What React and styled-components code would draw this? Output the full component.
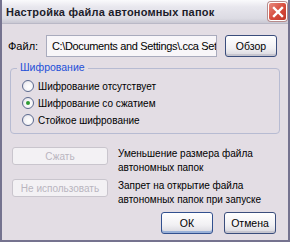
import styled, { createGlobalStyle } from "styled-components";

const Global = createGlobalStyle`
  html, body { margin: 0; padding: 0; background: #e3dde4; }
  * { box-sizing: border-box; }
`;

export default function App() {
  return (
    <>
      <Global />
      <Window>
        <TitleBar>
          <Title>Настройка файла автономных папок</Title>
          <CloseButton aria-label="close">
            <svg width="12" height="12" viewBox="0 0 12 12">
              <path d="M2 2 L10 10 M10 2 L2 10" stroke="#fff" strokeWidth="2.4" strokeLinecap="square" />
            </svg>
          </CloseButton>
        </TitleBar>
        <Body>
          <FileRow>
            <Label>Файл:</Label>
            <PathField>C:\Documents and Settings\.cca Set</PathField>
            <Button>Обзор</Button>
          </FileRow>
          <Group>
            <Legend>Шифрование</Legend>
            <Radio>
              <Dot />
              Шифрование отсутствует
            </Radio>
            <Radio>
              <Dot $checked />
              Шифрование со сжатием
            </Radio>
            <Radio>
              <Dot />
              Стойкое шифрование
            </Radio>
          </Group>
          <ActionRow>
            <WideButton disabled>Сжать</WideButton>
            <Note>
              Уменьшение размера файла
              <br />
              автономных папок
            </Note>
          </ActionRow>
          <ActionRow>
            <WideButton disabled>Не использовать</WideButton>
            <Note>
              Запрет на открытие файла
              <br />
              автономных папок при запуске
            </Note>
          </ActionRow>
          <Footer>
            <Button $default>ОК</Button>
            <Button>Отмена</Button>
          </Footer>
        </Body>
      </Window>
    </>
  );
}

const Window = styled.div`
  width: 290px;
  height: 242px;
  display: flex;
  flex-direction: column;
  border-left: 2px solid #75738f;
  border-right: 2px solid #75738f;
  border-bottom: 2px solid #75738f;
  background: #e3dde4;
  font-family: "Liberation Sans", Arial, sans-serif;
  font-size: 11px;
  color: #000;
  overflow: hidden;
`;

const TitleBar = styled.div`
  height: 24px;
  flex-shrink: 0;
  display: flex;
  align-items: center;
  justify-content: space-between;
  padding: 0 3px 0 6px;
  margin: 0 -2px;
  background: linear-gradient(#fafafc 0%, #e8e7ee 30%, #dcdbe3 80%, #c9c8d3 100%);
  border-bottom: 1px solid #b9b8c6;
`;

const Title = styled.div`
  font-weight: bold;
  font-size: 11px;
  color: #1c1c2a;
  letter-spacing: 0.2px;
`;

const CloseButton = styled.div`
  width: 19px;
  height: 19px;
  border-radius: 3px;
  border: 1px solid #ffffff;
  background: linear-gradient(135deg, #e88a7f 0%, #d5493a 55%, #c2382b 100%);
  display: flex;
  align-items: center;
  justify-content: center;
  box-shadow: 0 0 0 1px #b78b8b;
`;

const Body = styled.div`
  flex: 1;
  display: flex;
  flex-direction: column;
  padding: 11px 8px 0 6px;
`;

const FileRow = styled.div`
  display: flex;
  align-items: center;
`;

const Label = styled.div`
  width: 38px;
`;

const PathField = styled.div`
  width: 171px;
  height: 22px;
  background: #f8f6f9;
  border: 1px solid #a9abbd;
  padding: 4px 0 0 5px;
  font-size: 11px;
  letter-spacing: -0.35px;
  white-space: nowrap;
  overflow: hidden;
  margin-right: 8px;
`;

const Button = styled.button`
  width: 52px;
  height: 22px;
  font: inherit;
  font-size: 10.5px;
  color: #000;
  border-radius: 3px;
  border: 1px solid ${(p) => (p.$default ? "#32508f" : "#3a4d7c")};
  background: linear-gradient(#ffffff 0%, #f1f0f3 60%, #d8d7de 100%);
  box-shadow: inset 0 -2px 0 ${(p) => (p.$default ? "#9ab1d8" : "#c6c5cf")};
  padding: 0;
`;

const Group = styled.div`
  position: relative;
  margin: 11px 0 0 2px;
  width: 270px;
  height: 66px;
  border: 1px solid #b7bbd2;
  border-radius: 4px;
  padding: 10px 0 0 11px;
  display: flex;
  flex-direction: column;
  gap: 3px;
`;

const Legend = styled.div`
  position: absolute;
  top: -8px;
  left: 6px;
  padding: 0 3px;
  background: #e3dde4;
  color: #1d4fd8;
  font-size: 10.5px;
`;

const Radio = styled.div`
  display: flex;
  align-items: center;
  gap: 4px;
  height: 14px;
  font-size: 10px;
`;

const Dot = styled.span`
  width: 12px;
  height: 12px;
  border-radius: 50%;
  border: 1px solid #5c6a8f;
  background: radial-gradient(circle at 60% 60%, #ffffff 0%, #f4f3f6 50%, #d6d5de 100%);
  display: flex;
  align-items: center;
  justify-content: center;
  &::after {
    content: "";
    display: ${(p) => (p.$checked ? "block" : "none")};
    width: 4px;
    height: 4px;
    border-radius: 50%;
    background: #2f9b34;
  }
`;

const ActionRow = styled.div`
  display: flex;
  align-items: flex-start;
  gap: 10px;
  margin-left: 4px;
  margin-top: 11px;
  & + & {
    margin-top: 2px;
  }
`;

const WideButton = styled.button`
  width: 96px;
  height: 18px;
  margin-top: 2px;
  font: inherit;
  font-size: 10px;
  color: #b9b5bf;
  border: 1px solid #c9c5cd;
  border-radius: 3px;
  background: #f3f1f4;
  padding: 0;
`;

const Note = styled.div`
  font-size: 10px;
  line-height: 14px;
  padding-top: 2px;
`;

const Footer = styled.div`
  display: flex;
  justify-content: flex-end;
  gap: 11px;
  margin-top: auto;
  margin-bottom: 6px;
  margin-right: 4px;
`;
